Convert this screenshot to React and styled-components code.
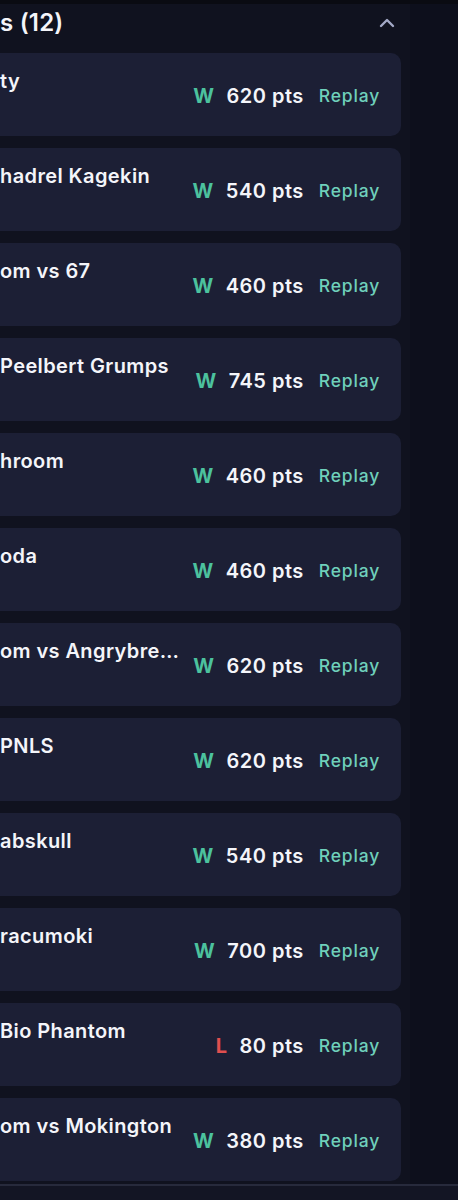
import React from "react";
import styled, { createGlobalStyle } from "styled-components";
import { ChevronUp } from "lucide-react";

const palette = {
  top: "#0a0b12",
  page: "#10121f",
  strip: "#0d0f1c",
  card: "#1c1f35",
  white: "#f4f5fa",
  win: "#4cc29e",
  loss: "#e04f4f",
  replay: "#6fd0bb",
  chevron: "#a3a9c6",
  footer: "#131524",
  footerLine: "#272a3c",
};

const matches = [
  { name: "ty", result: "W", pts: 620 },
  { name: "hadrel Kagekin", result: "W", pts: 540 },
  { name: "om vs 67", result: "W", pts: 460 },
  { name: "Peelbert Grumps", result: "W", pts: 745 },
  { name: "hroom", result: "W", pts: 460 },
  { name: "oda", result: "W", pts: 460 },
  { name: "om vs Angrybre…", result: "W", pts: 620 },
  { name: "PNLS", result: "W", pts: 620 },
  { name: "abskull", result: "W", pts: 540 },
  { name: "racumoki", result: "W", pts: 700 },
  { name: "Bio Phantom", result: "L", pts: 80 },
  { name: "om vs Mokington", result: "W", pts: 380 },
];

const GlobalStyle = createGlobalStyle`
  html, body {
    margin: 0;
    padding: 0;
    background: ${palette.page};
    overflow: hidden;
  }
  * { box-sizing: border-box; }
`;

const Page = styled.div`
  width: 458px;
  min-height: 1200px;
  display: flex;
  flex-direction: column;
  background: ${palette.page};
  border-top: 4px solid ${palette.top};
  font-family: "Inter", "Noto Sans", sans-serif;
  color: ${palette.white};
`;

const Body = styled.div`
  display: flex;
`;

const Main = styled.div`
  width: 410px;
  padding-right: 9px;
  padding-bottom: 3px;
`;

const Strip = styled.div`
  flex: 1;
  background: ${palette.strip};
`;

const Header = styled.div`
  height: 49px;
  display: flex;
  align-items: center;
  justify-content: space-between;
  padding-bottom: 12px;
`;

const Title = styled.h2`
  margin: 0;
  font-size: 24px;
  font-weight: 600;
  letter-spacing: 0.2px;
`;

const Toggle = styled.button`
  border: 0;
  background: none;
  padding: 0;
  margin-right: 2px;
  display: flex;
  color: ${palette.chevron};
`;

const List = styled.div`
  display: flex;
  flex-direction: column;
  gap: 12px;
`;

const Card = styled.div`
  height: 83px;
  display: flex;
  align-items: center;
  padding-right: 21px;
  background: ${palette.card};
  border-radius: 0 10px 10px 0;
`;

const Name = styled.div`
  flex: 1;
  min-width: 0;
  align-self: flex-start;
  padding-top: 15px;
  font-size: 20px;
  font-weight: 600;
  letter-spacing: 0.4px;
  line-height: 26px;
  white-space: nowrap;
  overflow: hidden;
  text-overflow: ellipsis;
`;

const Stats = styled.div`
  display: flex;
  align-items: center;
  margin-left: 14px;
  padding-top: 2px;
`;

const Result = styled.span`
  font-size: 20px;
  font-weight: 700;
  letter-spacing: 0.5px;
  color: ${(p) => (p.$win ? palette.win : palette.loss)};
  margin-right: 12px;
`;

const Points = styled.span`
  font-size: 20px;
  font-weight: 600;
  letter-spacing: 0.5px;
  margin-right: 15px;
`;

const Replay = styled.button`
  border: 0;
  background: none;
  padding: 0;
  font-family: inherit;
  font-size: 17.5px;
  font-weight: 500;
  letter-spacing: 0.8px;
  color: ${palette.replay};
`;

const Footer = styled.div`
  flex: 1;
  background: ${palette.footer};
  border-top: 2px solid ${palette.footerLine};
`;

export default function App() {
  return (
    <>
      <GlobalStyle />
      <Page>
        <Body>
          <Main>
            <Header>
              <Title>s (12)</Title>
              <Toggle>
                <ChevronUp size={24} strokeWidth={2.4} />
              </Toggle>
            </Header>
            <List>
              {matches.map((m, i) => (
                <Card key={i}>
                  <Name>{m.name}</Name>
                  <Stats>
                    <Result $win={m.result === "W"}>{m.result}</Result>
                    <Points>{m.pts} pts</Points>
                    <Replay>Replay</Replay>
                  </Stats>
                </Card>
              ))}
            </List>
          </Main>
          <Strip />
        </Body>
        <Footer />
      </Page>
    </>
  );
}
